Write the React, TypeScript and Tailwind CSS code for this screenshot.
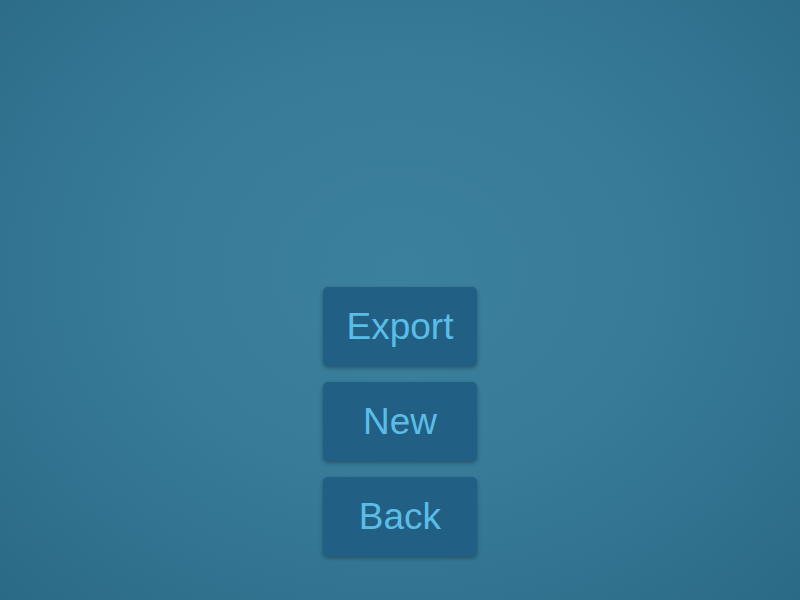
export default function App() {
  const items = ['Export', 'New', 'Back']

  return (
    <div className="w-[800px] h-[600px] flex flex-col items-center justify-end gap-[16px] pb-[44px] bg-[radial-gradient(ellipse_at_50%_45%,#3b809d_0%,#377b98_45%,#2b6a87_100%)] font-['Liberation_Sans',Arial,sans-serif]">
      {items.map((label) => (
        <button
          key={label}
          className="w-[154px] h-[79px] rounded-[5px] bg-[#215f84] text-[#5bbde6] text-[37px] leading-none shadow-[0_2px_4px_rgba(0,0,0,0.3)] flex items-center justify-center"
        >
          {label}
        </button>
      ))}
    </div>
  )
}
